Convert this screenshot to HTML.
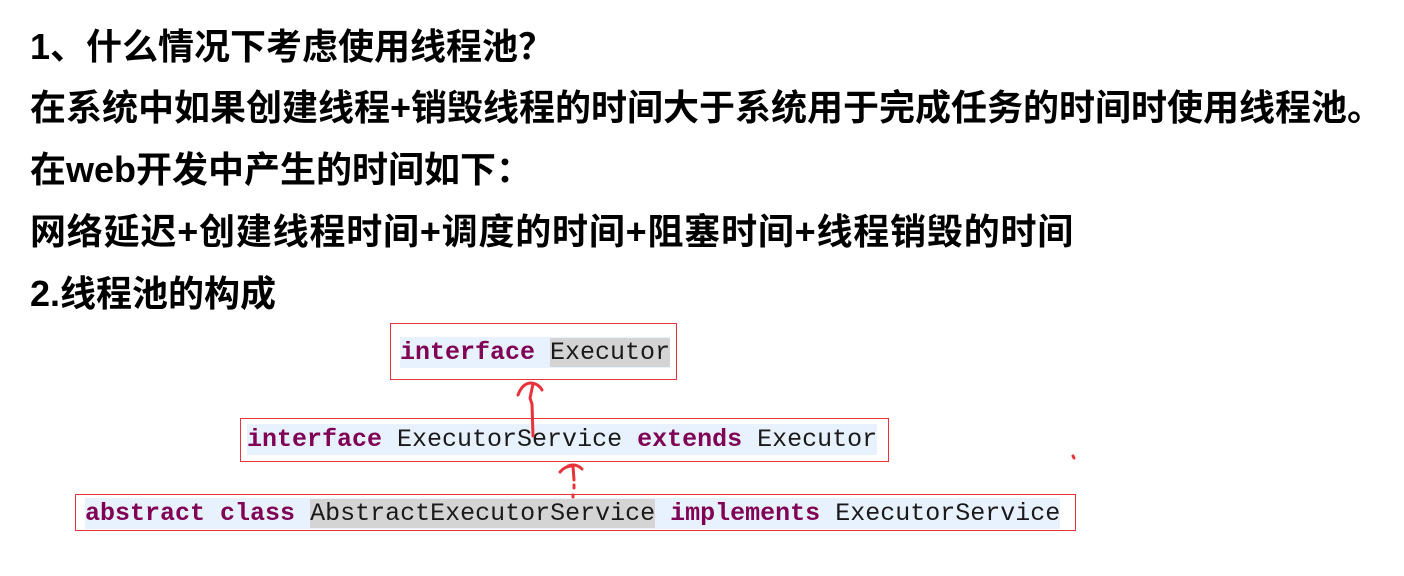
<!DOCTYPE html><html><head><meta charset="utf-8"><style>
body{margin:0;width:1404px;height:576px;background:#fff;position:relative;overflow:hidden}
.t{position:absolute;left:30px;font:bold 36px "Liberation Sans","Noto Sans CJK SC",sans-serif;letter-spacing:0;color:#000;white-space:nowrap;line-height:40px}
.f{font-family:"Noto Sans CJK SC",sans-serif;line-height:0}
.box{position:absolute;border:1.5px solid #e8333b}
.c{position:absolute;font:25px "Liberation Mono",monospace;line-height:31px;background:#e8f2fe;color:#1a1a1a;white-space:pre}
.k{color:#7f0055;font-weight:bold}
.g{background:#d4d4d4}
</style></head><body>
<div class="t" style="top:27px">1、什么情况下考虑使用线程池<span class="f">？</span></div>
<div class="t" style="top:88px">在系统中如果创建线程+销毁线程的时间大于系统用于完成任务的时间时使用线程池。</div>
<div class="t" style="top:150px">在web开发中产生的时间如下<span class="f">：</span></div>
<div class="t" style="top:212px;letter-spacing:0.8px">网络延迟+创建线程时间+调度的时间+阻塞时间+线程销毁的时间</div>
<div class="t" style="top:274px">2.线程池的构成</div>
<div class="box" style="left:390px;top:323px;width:285px;height:55px"></div>
<div class="c" style="left:400px;top:337px"><span class="k">interface</span> <span class="g">Executor</span></div>
<div class="box" style="left:240px;top:418px;width:647px;height:42px"></div>
<div class="c" style="left:247px;top:424px"><span class="k">interface</span> ExecutorService <span class="k">extends</span> Executor</div>
<div class="box" style="left:75px;top:494px;width:999px;height:35px"></div>
<div class="c" style="left:85px;top:498px"><span class="k">abstract</span> <span class="k">class</span> <span class="g">AbstractExecutorService</span> <span class="k">implements</span> ExecutorService</div>
<svg style="position:absolute;left:0;top:0" width="1404" height="576"><g stroke="#e8333b" stroke-width="3" fill="none" stroke-linecap="round">
<path d="M533 436 L532 404 L530 398 L533 384"/>
<path d="M518 395 Q522 384 530 383 Q538 383 542 390"/>
<path d="M573 466 L574 480 M574 485 L574 488 M573 495 L573 497"/>
<path d="M560 472 Q565 466 572 466 M568 466 Q576 463 582 469"/>
<path d="M1073 456 l1 2"/></g></svg>
</body></html>
